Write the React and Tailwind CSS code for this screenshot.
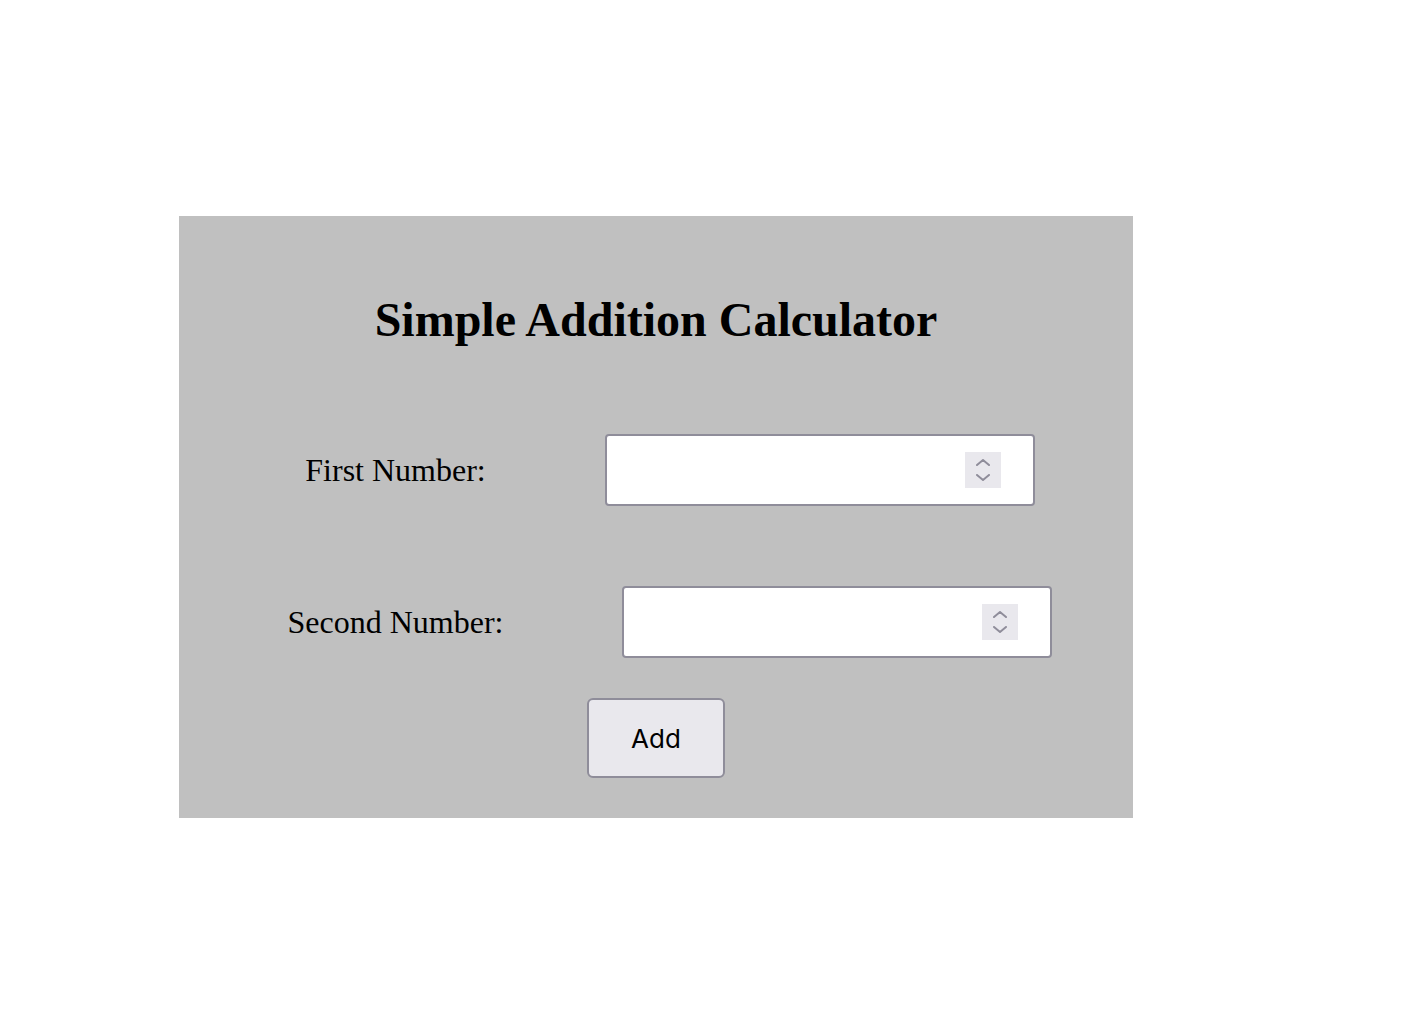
import React from "react";

const Spinner = () => (
  <span className="flex h-[36px] w-[36px] shrink-0 flex-col items-center justify-center gap-[8px] bg-[#e9e8ed]">
    <svg width="14" height="7" viewBox="0 0 14 7" fill="none">
      <path d="M1 6 L7 1 L13 6" stroke="#8f8d9a" strokeWidth="2" strokeLinecap="round" strokeLinejoin="round" />
    </svg>
    <svg width="14" height="7" viewBox="0 0 14 7" fill="none">
      <path d="M1 1 L7 6 L13 1" stroke="#8f8d9a" strokeWidth="2" strokeLinecap="round" strokeLinejoin="round" />
    </svg>
  </span>
);

const NumberField = ({ label }) => (
  <div className="flex items-center justify-center pl-[28px]">
    <label className="mr-[119px] text-[32px] leading-none text-black">{label}</label>
    <div className="flex h-[72px] w-[430px] items-center rounded-[4px] border-2 border-[#8f8d9a] bg-white pr-[32px]">
      <input
        type="number"
        className="h-full min-w-0 flex-1 bg-transparent px-3 text-[26px] outline-none [appearance:textfield] [&::-webkit-inner-spin-button]:appearance-none [&::-webkit-outer-spin-button]:appearance-none"
      />
      <Spinner />
    </div>
  </div>
);

export default function App() {
  return (
    <div className="min-h-[1020px] bg-white pt-[216px] pl-[179px] font-['Liberation_Serif','Times_New_Roman',serif]">
      <div className="flex h-[602px] w-[954px] flex-col items-center bg-[#c0c0c0] pt-[76px]">
        <h1 className="text-[48px] font-bold leading-[56px] text-black">Simple Addition Calculator</h1>
        <div className="mt-[86px] flex w-full flex-col gap-[80px]">
          <NumberField label="First Number:" />
          <NumberField label="Second Number:" />
        </div>
        <button className="mt-[40px] h-[80px] w-[138px] rounded-[6px] border-2 border-[#8f8d9a] bg-[#e9e8ed] font-['Inter','Noto_Sans',sans-serif] text-[26px] text-black">
          Add
        </button>
      </div>
    </div>
  );
}
